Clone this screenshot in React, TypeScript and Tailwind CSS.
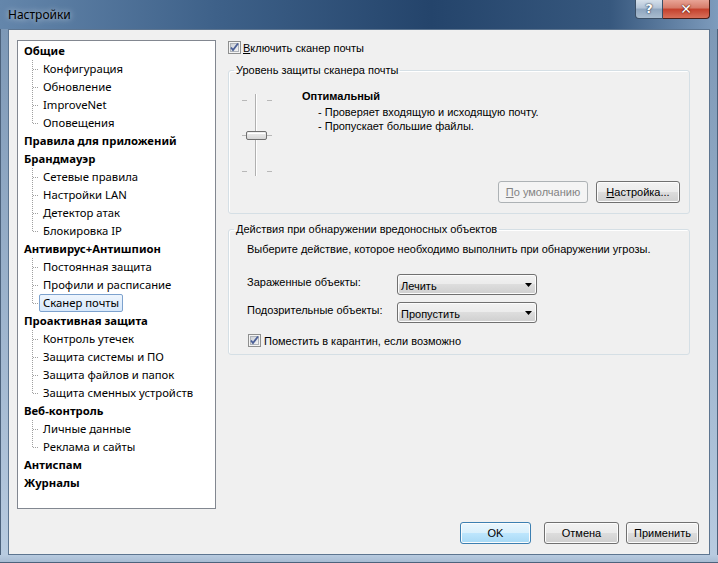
import React from "react";

type Group = { title: string; children: string[] };

const tree: Group[] = [
  { title: "Общие", children: ["Конфигурация", "Обновление", "ImproveNet", "Оповещения"] },
  { title: "Правила для приложений", children: [] },
  { title: "Брандмауэр", children: ["Сетевые правила", "Настройки LAN", "Детектор атак", "Блокировка IP"] },
  { title: "Антивирус+Антишпион", children: ["Постоянная защита", "Профили и расписание", "Сканер почты"] },
  {
    title: "Проактивная защита",
    children: ["Контроль утечек", "Защита системы и ПО", "Защита файлов и папок", "Защита сменных устройств"],
  },
  { title: "Веб-контроль", children: ["Личные данные", "Реклама и сайты"] },
  { title: "Антиспам", children: [] },
  { title: "Журналы", children: [] },
];

const Connector = ({ last }: { last: boolean }) => (
  <svg width="7" height="18" className="shrink-0" shapeRendering="crispEdges">
    <line x1="0.5" y1="0" x2="0.5" y2={last ? 10 : 18} stroke="#a0a0a0" strokeDasharray="1 1" />
    <line x1="1" y1="9.5" x2="7" y2="9.5" stroke="#a0a0a0" strokeDasharray="1 1" />
  </svg>
);

const CheckBox = () => (
  <svg width="13" height="13" className="shrink-0" shapeRendering="crispEdges">
    <defs>
      <linearGradient id="cbfill" x1="0" y1="0" x2="1" y2="1">
        <stop offset="0" stopColor="#cbcfd5" />
        <stop offset="1" stopColor="#f6f6f6" />
      </linearGradient>
    </defs>
    <rect x="0.5" y="0.5" width="12" height="12" fill="#f4f4f4" stroke="#8e8f8f" />
    <rect x="2.5" y="2.5" width="8" height="8" fill="url(#cbfill)" stroke="#aeb3b9" />
    <path d="M3 6.5 L5 9 L10 2.5" fill="none" stroke="#4a5f97" strokeWidth="1.8" shapeRendering="auto" />
  </svg>
);

const btn =
  "h-[22px] flex items-center justify-center rounded-[3px] border border-[#707070] bg-[linear-gradient(#f2f2f2_0%,#ebebeb_50%,#dddddd_50%,#cfcfcf_100%)] shadow-[inset_0_0_0_1px_#fcfcfc] text-black";

const Select = ({ value }: { value: string }) => (
  <div className="w-[140px] h-[21px] flex items-center justify-between rounded-[3px] border border-[#707070] bg-[linear-gradient(#f2f2f2_0%,#ebebeb_50%,#dddddd_50%,#cfcfcf_100%)] shadow-[inset_0_0_0_1px_#fcfcfc] pl-[3px] pr-[4px]">
    <span className="pt-[2px]">{value}</span>
    <svg width="7" height="4">
      <path d="M0 0 H7 L3.5 4 Z" fill="#000" />
    </svg>
  </div>
);

const Slider = () => (
  <svg width="40" height="90" className="shrink-0" shapeRendering="crispEdges">
    <defs>
      <linearGradient id="thumb" x1="0" y1="0" x2="0" y2="1">
        <stop offset="0" stopColor="#f2f2f2" />
        <stop offset="1" stopColor="#d4d4d4" />
      </linearGradient>
    </defs>
    <line x1="17.5" y1="4" x2="17.5" y2="86" stroke="#b0b0b0" />
    <line x1="18.5" y1="4" x2="18.5" y2="86" stroke="#ffffff" />
    {[10, 45, 81].map((y) => (
      <g key={y}>
        <line x1="4" y1={y + 0.5} x2="9" y2={y + 0.5} stroke="#b8b8b8" />
        <line x1="29" y1={y + 0.5} x2="34" y2={y + 0.5} stroke="#b8b8b8" />
      </g>
    ))}
    <rect x="8.5" y="41.5" width="20" height="8" rx="1.5" fill="url(#thumb)" stroke="#707070" shapeRendering="auto" />
    <line x1="10" y1="43.5" x2="27" y2="43.5" stroke="#ffffff" />
  </svg>
);

export default function App() {
  return (
    <div className="w-[718px] h-[563px] flex flex-col overflow-hidden bg-[#9fb6cf] font-['Liberation_Sans',Arial,sans-serif] text-[11px] leading-[14px] text-black">
      {/* title bar */}
      <div className="h-[29px] shrink-0 flex items-start justify-between bg-[linear-gradient(90deg,#6486ab_0%,#3e6189_30%,#24446b_60%,#37587e_85%,#7e9cbd_100%)]">
        <div className="h-[29px] flex items-center pl-[8px] font-['Noto_Sans',sans-serif] text-[12px] [text-shadow:0_0_6px_rgba(255,255,255,0.8)]">
          Настройки
        </div>
        <div className="flex mr-[8px]">
          <div className="w-[28px] h-[19px] flex items-center justify-center rounded-bl-[4px] border border-t-0 border-[#3b4f66] bg-[linear-gradient(#d5e0eb_0%,#b2c3d6_45%,#8ea5be_50%,#a9bccf_100%)] text-white font-bold text-[13px] font-['DejaVu_Sans',sans-serif] [text-shadow:0_0_2px_#23344a,0_0_1px_#23344a]">
            ?
          </div>
          <div className="w-[47px] h-[19px] flex items-center justify-center rounded-br-[4px] border border-t-0 border-l-0 border-[#4a1f1a] bg-[linear-gradient(#e8a496_0%,#d67a68_45%,#c4402c_50%,#d8705a_100%)] text-white font-bold text-[14px] font-['DejaVu_Sans',sans-serif] [text-shadow:0_0_2px_#5a150c,0_0_1px_#5a150c]">
            ✕
          </div>
        </div>
      </div>

      {/* frame + client */}
      <div className="flex flex-1 min-h-0">
        <div className="w-[8px] shrink-0 bg-[linear-gradient(#7d98b6,#b8cbe0)] border-l border-[#4c627c]" />
        <div className="flex-1 flex flex-col bg-[#f0f0f0] border border-[#5d7590]">
          <div className="flex pt-[10px] pl-[8px]">
            {/* tree */}
            <div className="w-[199px] h-[469px] shrink-0 border border-[#828790] bg-white pl-[6px] pt-[1px] font-['Noto_Sans',sans-serif] text-[11.3px] leading-[18px]">
              {tree.map((g) => (
                <div key={g.title}>
                  <div className="h-[18px] font-bold">{g.title}</div>
                  {g.children.map((c, i) => (
                    <div key={c} className="h-[18px] flex">
                      <div className="w-[8px] shrink-0" />
                      <Connector last={i === g.children.length - 1} />
                      <span
                        className={
                          c === "Сканер почты"
                            ? "h-[18px] px-[3px] border border-[#7da2ce] rounded-[2px] bg-[linear-gradient(#eef5fd,#d7e8fb)] leading-[16px]"
                            : "h-[18px] px-[3px] border border-transparent leading-[16px]"
                        }
                      >
                        {c}
                      </span>
                    </div>
                  ))}
                </div>
              ))}
            </div>

            {/* right panel */}
            <div className="w-[462px] ml-[12px] flex flex-col">
              <div className="mt-[1px] h-[13px] flex items-center gap-[2px]">
                <CheckBox />
                <span>
                  <u>В</u>ключить сканер почты
                </span>
              </div>

              <fieldset className="mt-[9px] border border-[#d5dfe5] rounded-[3px] shadow-[inset_1px_1px_0_#fff]">
                <legend className="ml-[5px] px-[2px]">Уровень защиты сканера почты</legend>
                <div className="h-[136px] flex flex-col">
                  <div className="flex pt-[12px]">
                    <div className="ml-[9px] mt-[1px]">
                      <Slider />
                    </div>
                    <div className="ml-[24px] flex flex-col">
                      <div className="font-bold">Оптимальный</div>
                      <div className="pl-[16px] mt-[2px]">- Проверяет входящую и исходящую почту.</div>
                      <div className="pl-[16px]">- Пропускает большие файлы.</div>
                    </div>
                  </div>
                  <div className="mt-auto flex justify-end gap-[8px] pr-[9px] pb-[10px]">
                    <div className="w-[90px] h-[22px] flex items-center justify-center rounded-[3px] border border-[#adb2b5] bg-[#f4f4f4] text-[#838383]">
                      <span>
                        <u>П</u>о умолчанию
                      </span>
                    </div>
                    <div className={`w-[84px] ${btn}`}>
                      <span>
                        <u>Н</u>астройка...
                      </span>
                    </div>
                  </div>
                </div>
              </fieldset>

              <fieldset className="mt-[8px] border border-[#d5dfe5] rounded-[3px] shadow-[inset_1px_1px_0_#fff]">
                <legend className="ml-[5px] px-[2px]">Действия при обнаружении вредоносных объектов</legend>
                <div className="flex flex-col pl-[18px] pt-[6px] pb-[7px]">
                  <div>Выберите действие, которое необходимо выполнить при обнаружении угрозы.</div>
                  <div className="mt-[18px] flex items-start">
                    <span className="w-[150px] pt-[1px]">Зараженные объекты:</span>
                    <Select value="Лечить" />
                  </div>
                  <div className="mt-[7px] flex items-start">
                    <span className="w-[150px] pt-[1px]">Подозрительные объекты:</span>
                    <Select value="Пропустить" />
                  </div>
                  <div className="mt-[11px] ml-[1px] h-[13px] flex items-center gap-[3px]">
                    <CheckBox />
                    <span>Поместить в карантин, если возможно</span>
                  </div>
                </div>
              </fieldset>
            </div>
          </div>

          {/* bottom buttons */}
          <div className="mt-auto mb-[10px] flex justify-end pr-[10px]">
            <div className="w-[71px] h-[22px] flex items-center justify-center rounded-[3px] border border-[#3c7fb1] bg-[linear-gradient(#eaf6fd_0%,#d9f0fc_50%,#bee6fd_50%,#a7d9f5_100%)] shadow-[inset_0_0_0_1px_#fcfcfc]">
              OK
            </div>
            <div className={`ml-[13px] w-[75px] ${btn}`}>Отмена</div>
            <div className={`ml-[7px] w-[73px] ${btn}`}>Применить</div>
          </div>
        </div>
        <div className="w-[8px] shrink-0 bg-[linear-gradient(#7d98b6,#b8cbe0)] border-r border-[#4c627c]" />
      </div>
      <div className="h-[8px] shrink-0 bg-[linear-gradient(#b8cbe0,#a8bcd3)] border-b border-[#4c627c]" />
    </div>
  );
}
